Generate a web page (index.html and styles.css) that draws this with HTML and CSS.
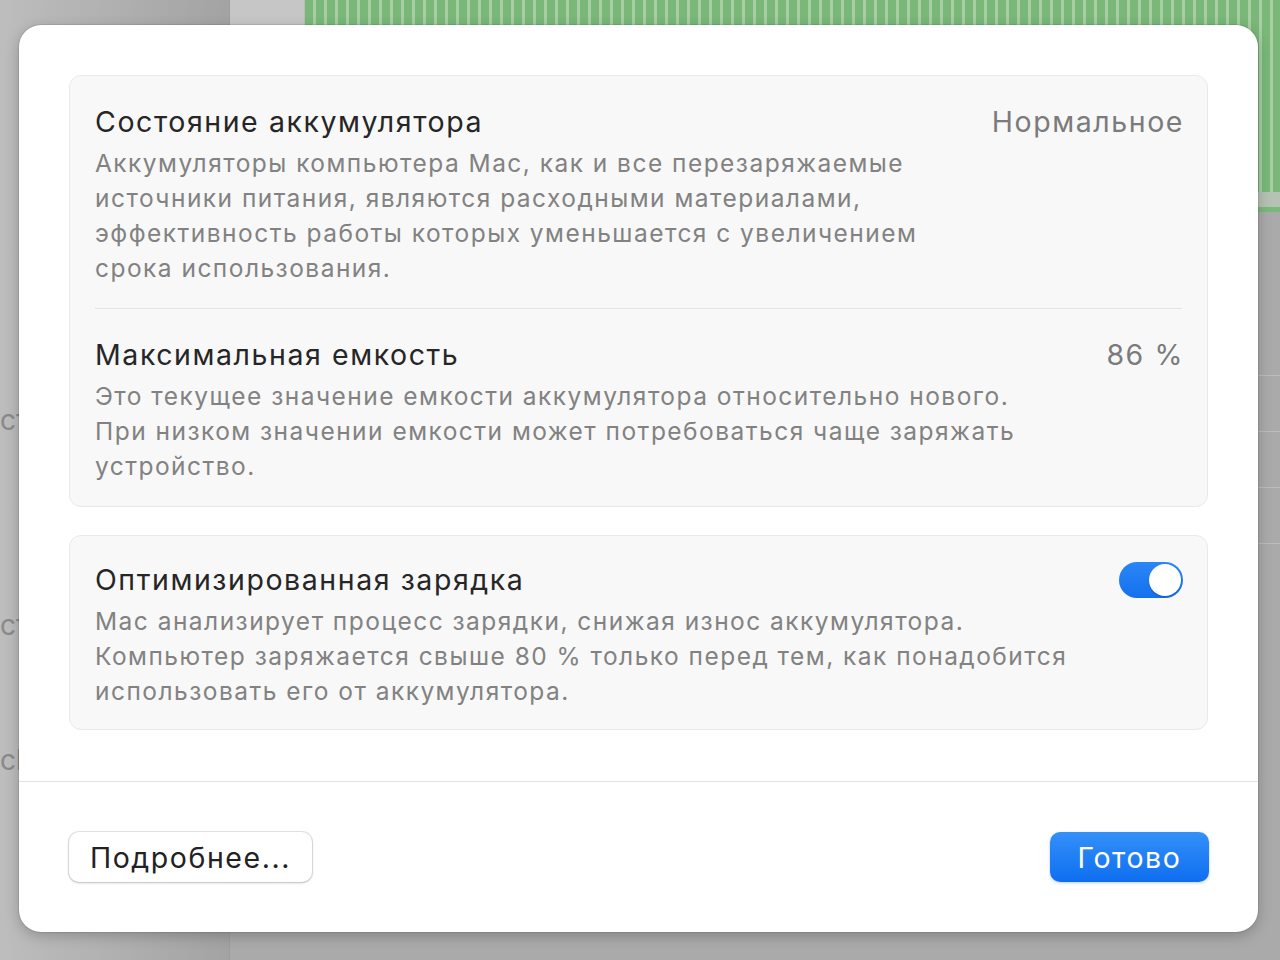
FILE: index.html
```html
<!DOCTYPE html>
<html lang="ru">

<head>
    <meta charset="UTF-8">
    <meta name="viewport" content="width=device-width, initial-scale=1.0">
    <title>Состояние аккумулятора</title>
    <link rel="stylesheet" href="styles.css">
</head>

<body>
    <!-- window behind the sheet -->
    <div class="backdrop">
        <aside class="sidebar">
            <div class="side-item">ст</div>
            <div class="side-item">ст</div>
            <div class="side-item">cl</div>
        </aside>
        <main class="window">
            <div class="chart-row">
                <div class="chart-pad"></div>
                <div class="chart"></div>
            </div>
            <div class="chart-base"></div>
            <div class="rows">
                <div class="row"></div>
                <div class="row"></div>
                <div class="row"></div>
                <div class="row"></div>
            </div>
        </main>
    </div>

    <div class="dialog">
        <div class="dialog-body">
            <div class="card">
                <div class="section">
                    <div class="section-text">
                        <div class="section-title">Состояние аккумулятора</div>
                        <div class="section-desc">
                            Аккумуляторы компьютера Mac, как и все перезаряжаемые<br>
                            источники питания, являются расходными материалами,<br>
                            эффективность работы которых уменьшается с увеличением<br>
                            срока использования.
                        </div>
                    </div>
                    <div class="section-value">Нормальное</div>
                </div>
                <div class="section">
                    <div class="section-text">
                        <div class="section-title">Максимальная емкость</div>
                        <div class="section-desc">
                            Это текущее значение емкости аккумулятора относительно нового.<br>
                            При низком значении емкости может потребоваться чаще заряжать<br>
                            устройство.
                        </div>
                    </div>
                    <div class="section-value">86 %</div>
                </div>
            </div>

            <div class="card">
                <div class="section compact">
                    <div class="section-text">
                        <div class="section-title">Оптимизированная зарядка</div>
                        <div class="section-desc">
                            Mac анализирует процесс зарядки, снижая износ аккумулятора.<br>
                            Компьютер заряжается свыше 80 % только перед тем, как понадобится<br>
                            использовать его от аккумулятора.
                        </div>
                    </div>
                    <div class="toggle on">
                        <div class="knob"></div>
                    </div>
                </div>
            </div>
        </div>

        <div class="dialog-footer">
            <button class="btn btn-secondary">Подробнее...</button>
            <button class="btn btn-primary">Готово</button>
        </div>
    </div>
</body>

</html>
```

FILE: styles.css
```css
* {
    margin: 0;
    padding: 0;
    box-sizing: border-box;
}

body {
    width: 1280px;
    height: 960px;
    overflow: hidden;
    position: relative;
    background: #a9a9a9;
    font-family: Inter, "Noto Sans", sans-serif;
}

/* backdrop window */

.backdrop {
    display: flex;
    height: 960px;
}

.sidebar {
    width: 230px;
    background: linear-gradient(90deg, #bdbdbd, #a3a3a3);
    border-right: 1px solid #9d9d9d;
    padding-top: 400px;
    color: #8a8a8a;
    font-size: 28px;
}

.side-item {
    height: 40px;
    line-height: 40px;
}

.side-item:nth-child(2) {
    margin-top: 165px;
}

.side-item:nth-child(3) {
    margin-top: 95px;
}

.window {
    flex: 1;
    background: #aaaaaa;
}

.chart-row {
    display: flex;
    height: 192px;
}

.chart-pad {
    width: 75px;
    background: #c6c6c6;
    border-right: 1px solid #bcbcbc;
}

.chart {
    flex: 1;
    background: repeating-linear-gradient(90deg, #79b879 0 8px, #a9cea3 8px 11px);
}

.chart-base {
    height: 20px;
    background: #b6c2b5;
    border-bottom: 5px solid #7bb87b;
}

.rows {
    padding-top: 108px;
}

.row {
    height: 56px;
    border-bottom: 1px solid #bdbdbd;
}

/* sheet */

.dialog {
    position: absolute;
    left: 19px;
    top: 25px;
    width: 1239px;
    height: 907px;
    background: #fff;
    border-radius: 22px;
    box-shadow: 0 0 0 1px rgba(0, 0, 0, 0.08), 0 4px 14px rgba(0, 0, 0, 0.22);
    display: flex;
    flex-direction: column;
    overflow: hidden;
}

.dialog-body {
    display: flex;
    flex-direction: column;
    gap: 28px;
    padding: 50px 50px 51px;
}

.card {
    background: #f8f8f8;
    border: 1px solid #e9e9e9;
    border-radius: 12px;
    padding: 0 25px;
}

.section {
    display: flex;
    gap: 20px;
    padding: 28px 0 22px;
}

.section + .section {
    border-top: 1px solid #e3e3e3;
}

.section.compact {
    padding: 26px 0 20px;
}

.section-text {
    flex: 1;
}

.section-title {
    font-size: 28.5px;
    line-height: 36px;
    letter-spacing: 0.055em;
    color: #262626;
}

.section-desc {
    margin-top: 6px;
    font-size: 24.5px;
    line-height: 35px;
    letter-spacing: 0.06em;
    color: #828282;
}

.section-value {
    margin-right: -2px;
    font-size: 28.5px;
    line-height: 36px;
    letter-spacing: 0.055em;
    color: #7b7b7b;
}

.toggle {
    width: 64px;
    height: 36px;
    margin-right: -1px;
    border-radius: 18px;
    background: #d9d9d9;
    padding: 2px;
    display: flex;
}

.toggle.on {
    background: linear-gradient(#2b87f6, #1470ee);
    justify-content: flex-end;
}

.knob {
    width: 32px;
    height: 32px;
    border-radius: 50%;
    background: #fff;
    box-shadow: 0 1px 2px rgba(0, 0, 0, 0.2);
}

.dialog-footer {
    border-top: 1px solid #e2e2e2;
    padding: 50px 49px 49px 50px;
    display: flex;
    justify-content: space-between;
    align-items: center;
}

.btn {
    height: 50px;
    border: none;
    border-radius: 10px;
    font-family: Inter, "Noto Sans", sans-serif;
    font-size: 28.5px;
    letter-spacing: 0.055em;
    cursor: pointer;
}

.btn-secondary {
    width: 243px;
    background: #fff;
    color: #222;
    box-shadow: 0 0 0 1px rgba(0, 0, 0, 0.1), 0 1px 3px rgba(0, 0, 0, 0.18);
}

.btn-primary {
    width: 159px;
    background: linear-gradient(#3590f8, #0e6ef0);
    color: #fff;
    box-shadow: 0 1px 3px rgba(0, 90, 220, 0.3);
}
```
